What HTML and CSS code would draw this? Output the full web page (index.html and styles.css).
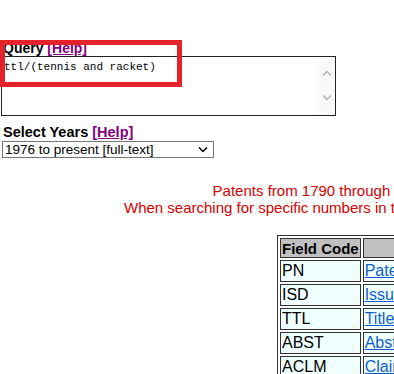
FILE: index.html
```html
<!DOCTYPE html>
<html lang="en">
<head>
    <meta charset="UTF-8">
    <title>Patent Advanced Search</title>
    <link rel="stylesheet" href="styles.css">
</head>
<body>
    <div class="page">
        <form class="search">
            <div class="label">Query <a href="#" class="help">[Help]</a></div>
            <div class="query-box">
                <textarea class="query" spellcheck="false">ttl/(tennis and racket)</textarea>
                <div class="scroll">
                    <svg width="10" height="6" viewBox="0 0 10 6"><path d="M1 5.5 L5 1.5 L9 5.5" fill="none" stroke="#b4b4b4" stroke-width="1.5"/></svg>
                    <svg width="10" height="6" viewBox="0 0 10 6"><path d="M1 0.5 L5 4.5 L9 0.5" fill="none" stroke="#b4b4b4" stroke-width="1.5"/></svg>
                </div>
            </div>
            <div class="label years">Select Years <a href="#" class="help">[Help]</a></div>
            <select class="years-select">
                <option>1976 to present [full-text]</option>
                <option>1790 to present [entire database]</option>
            </select>
        </form>

        <div class="notice">
            <div>Patents from 1790 through 1975 are searchable only by Issue Date, Patent Number, and Current US Classification.</div>
            <div>When searching for specific numbers in the Patent Number field, patent numbers must be seven characters in length, excluding commas only.</div>
        </div>

        <table class="fields">
            <tr><th class="code">Field Code</th><th>Field Name</th></tr>
            <tr><td>PN</td><td><a href="#">Patent Number</a></td></tr>
            <tr><td>ISD</td><td><a href="#">Issue Date</a></td></tr>
            <tr><td>TTL</td><td><a href="#">Title</a></td></tr>
            <tr><td>ABST</td><td><a href="#">Abstract</a></td></tr>
            <tr><td>ACLM</td><td><a href="#">Claim(s)</a></td></tr>
        </table>

        <div class="highlight"></div>
    </div>
</body>
</html>
```

FILE: styles.css
```css
html, body {
    overflow: hidden;
}

body {
    margin: 0;
    font-family: "Liberation Sans", Arial, sans-serif;
    color: #000;
    background: #fff;
}

.page {
    position: relative;
    width: 1189px;
    padding-top: 40px;
}

.search {
    padding-left: 2px;
}

.label {
    font-weight: bold;
    font-size: 14px;
    line-height: 16px;
    padding-left: 1px;
}

.help {
    color: #800080;
}

.query-box {
    display: flex;
    box-sizing: border-box;
    width: 335px;
    height: 60px;
    margin-left: -1px;
    border: 1px solid #222;
}

.query {
    flex: 1;
    margin: 0;
    padding: 4px 2px 2px;
    border: none;
    outline: none;
    font-family: "Liberation Mono", monospace;
    font-size: 11px;
    line-height: 13px;
    resize: none;
    overflow: hidden;
}

.scroll {
    width: 16px;
    display: flex;
    flex-direction: column;
    align-items: center;
    justify-content: space-between;
    padding: 13px 0 14px;
    background: #f9f9f9;
}

.years {
    margin-top: 8px;
    font-size: 14.5px;
    line-height: 17px;
}

.years-select {
    display: block;
    width: 212px;
    height: 17px;
    margin: 0;
    padding: 0 2px;
    border: 1px solid #767676;
    border-radius: 0;
    font-family: "Liberation Sans", Arial, sans-serif;
    font-size: 13.5px;
    color: #000;
    -webkit-appearance: none;
    appearance: none;
    background: #fff url("data:image/svg+xml,%3Csvg xmlns='http://www.w3.org/2000/svg' width='10' height='6'%3E%3Cpath d='M1 0.5 L5 4.5 L9 0.5' fill='none' stroke='%23000' stroke-width='1.5'/%3E%3C/svg%3E") no-repeat right 5px center;
}

.notice {
    margin-top: 24px;
    text-align: center;
    color: #d40000;
    font-size: 15px;
    line-height: 17px;
    white-space: nowrap;
}

.fields {
    margin: 19px 0 0 277px;
    border: 1px solid #333;
    border-spacing: 2px;
    font-size: 16px;
    white-space: nowrap;
}

.fields th,
.fields td {
    border: 1px solid #333;
    padding: 0 1px;
    text-align: left;
    height: 20px;
}

.fields th {
    background: #c0c0c0;
    font-size: 15px;
    height: 18px;
    text-align: center;
    width: 240px;
}

.fields th.code {
    width: 75px;
    text-align: left;
}

.fields td {
    background: #f0ffff;
}

.fields a {
    color: #1060c8;
}

.highlight {
    position: absolute;
    left: 0;
    top: 40px;
    width: 182px;
    height: 47px;
    box-sizing: border-box;
    border: 5px solid #e3222a;
}
```
